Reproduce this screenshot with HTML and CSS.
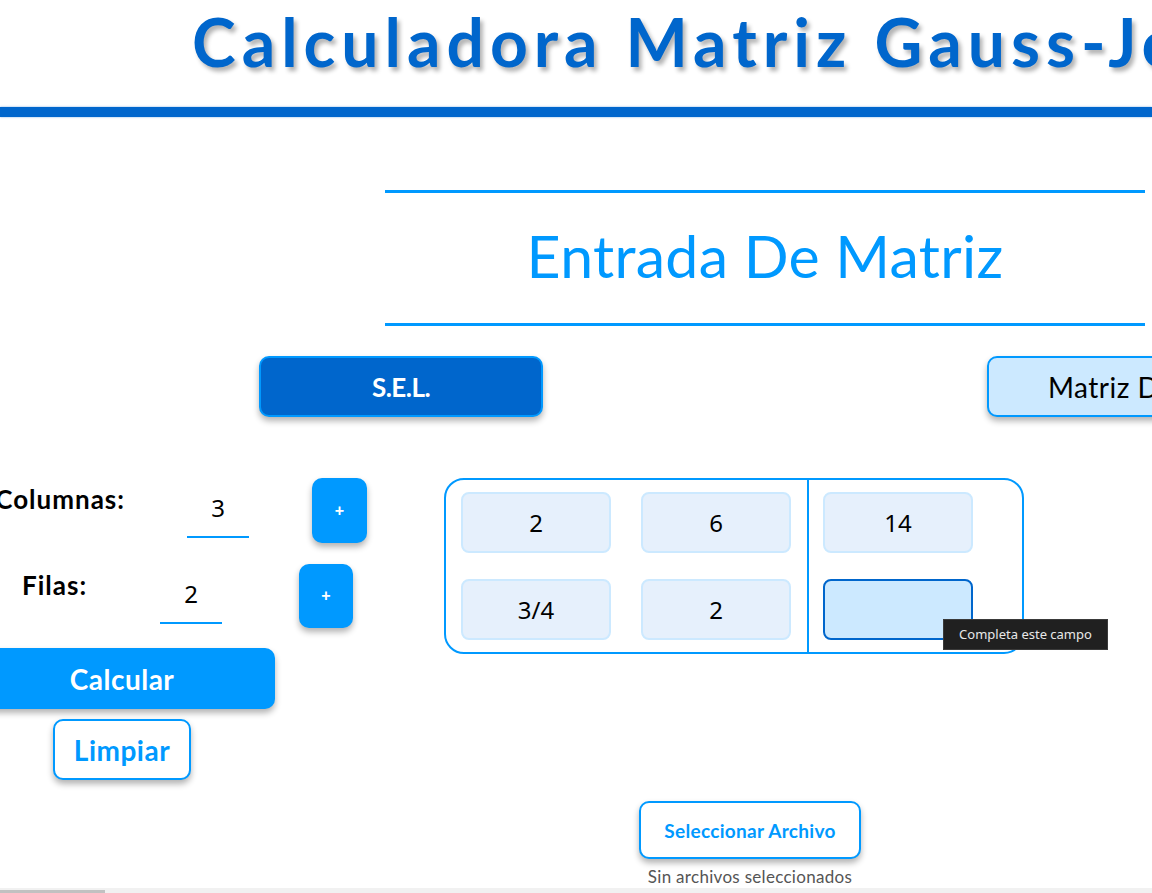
FILE: index.html
```html
<!DOCTYPE html>
<html lang="es">
<head>
<meta charset="utf-8">
<title>Calculadora Matriz Gauss-Jordan</title>
<link rel="stylesheet" href="styles.css">
</head>
<body>
<header class="header">
  <h1 class="title">Calculadora Matriz Gauss-Jordan</h1>
</header>
<div class="bar"></div>

<section class="entry">
  <div class="entry-head">
    <h2 class="entry-title">Entrada De Matriz</h2>
  </div>

  <div class="modes">
    <button class="mode mode-active">S.E.L.</button>
    <button class="mode mode-idle">Matriz Determinante</button>
  </div>

  <div class="work">
    <div class="controls">
      <div class="ctl-row row-cols">
        <label class="ctl-label">Columnas:</label>
        <input class="ctl-input" type="text" value="3">
        <button class="plus">+</button>
      </div>
      <div class="ctl-row row-rows">
        <label class="ctl-label">Filas:</label>
        <input class="ctl-input" type="text" value="2">
        <button class="plus">+</button>
      </div>
      <button class="calc">Calcular</button>
      <button class="clear">Limpiar</button>
    </div>

    <div class="matrix">
      <div class="coef">
        <input class="cell" type="text" value="2">
        <input class="cell" type="text" value="6">
        <input class="cell" type="text" value="3/4">
        <input class="cell" type="text" value="2">
      </div>
      <div class="consts">
        <input class="cell" type="text" value="14">
        <input class="cell cell-focus" type="text" value="">
      </div>
      <div class="tooltip">Completa este campo</div>
    </div>
  </div>

  <div class="file">
    <button class="file-btn">Seleccionar Archivo</button>
    <span class="file-note">Sin archivos seleccionados</span>
  </div>
</section>

<div class="hscroll"><div class="hscroll-thumb"></div></div>
</body>
</html>
```

FILE: styles.css
```css
html, body {
  margin: 0;
  padding: 0;
  background: #ffffff;
  overflow: hidden;
  width: 1152px;
  height: 893px;
}

body {
  font-family: "Lato", "DejaVu Sans", sans-serif;
  color: #000;
}

.header {
  height: 107px;
  overflow: hidden;
  white-space: nowrap;
}

.title {
  margin: 0;
  padding-left: 192px;
  font-family: "Lato", sans-serif;
  font-weight: 700;
  font-size: 66px;
  letter-spacing: 6px;
  line-height: 84px;
  color: #0066cc;
  text-shadow: 3px 4px 4px rgba(0, 0, 0, 0.3);
}

.bar {
  height: 10px;
  background: #0066cc;
  box-shadow: 0 0 2px rgba(0, 102, 204, 0.5);
}

.entry {
  padding-top: 73px;
}

.entry-head {
  margin-left: 385px;
  width: 760px;
  border-top: 3px solid #0099ff;
  border-bottom: 3px solid #0099ff;
  height: 130px;
  display: flex;
  align-items: center;
  justify-content: center;
}

.entry-title {
  margin: 0;
  font-family: "Lato", sans-serif;
  font-weight: 400;
  font-size: 59px;
  letter-spacing: 0.3px;
  color: #0099ff;
  padding-bottom: 6px;
}

.modes {
  display: flex;
  gap: 444px;
  padding-left: 259px;
  margin-top: 30px;
  white-space: nowrap;
}

.mode {
  flex: none;
  width: 284px;
  height: 61px;
  border-radius: 10px;
  border: 2px solid #0099ff;
  font-family: "Lato", sans-serif;
  font-size: 26px;
  font-weight: 700;
  box-shadow: 0 4px 6px rgba(0, 0, 0, 0.3);
  padding: 0;
}

.mode-active {
  background: #0066cc;
  color: #fff;
  letter-spacing: -0.5px;
}

.mode-idle {
  background: #cce9ff;
  color: #000;
  font-weight: 400;
  font-size: 28px;
  letter-spacing: 0.5px;
  text-align: left;
  padding-left: 59px;
}

.work {
  display: flex;
  margin-top: 61px;
  height: 323px;
}

.controls {
  width: 444px;
  flex: none;
  display: flex;
  flex-direction: column;
}

.ctl-row {
  display: flex;
  align-items: flex-start;
}

.ctl-label {
  font-family: "Lato", sans-serif;
  font-weight: 700;
  font-size: 26px;
  letter-spacing: 1px;
  line-height: 30px;
  white-space: nowrap;
}

.row-cols .ctl-label {
  width: 140px;
  margin-left: -15px;
  text-align: right;
  margin-top: 6px;
}

.row-rows {
  margin-top: 21px;
}

.row-rows .ctl-label {
  width: 63px;
  margin-left: 22px;
  margin-top: 6px;
}

.ctl-input {
  width: 62px;
  height: 46px;
  box-sizing: border-box;
  border: none;
  border-bottom: 2px solid #0099ff;
  background: transparent;
  text-align: center;
  font-family: "Noto Sans", sans-serif;
  font-size: 24px;
  color: #000;
  padding: 0 0 14px 0;
  margin-top: 14px;
  outline: none;
}

.row-cols .ctl-input {
  margin-left: 62px;
}

.row-rows .ctl-input {
  margin-left: 75px;
}

.plus {
  width: 55px;
  height: 65px;
  border: none;
  border-radius: 10px;
  background: #0099ff;
  color: #fff;
  font-weight: 700;
  font-size: 16px;
  box-shadow: 0 4px 6px rgba(0, 0, 0, 0.3);
  padding: 0;
}

.row-cols .plus {
  margin-left: 63px;
}

.row-rows .plus {
  margin-left: 77px;
  width: 54px;
  height: 64px;
}

.calc {
  margin-top: 20px;
  margin-left: -31px;
  width: 306px;
  height: 61px;
  border: none;
  border-radius: 10px;
  background: #0099ff;
  color: #fff;
  font-family: "Lato", sans-serif;
  font-weight: 700;
  font-size: 28px;
  letter-spacing: 0.5px;
  box-shadow: 0 4px 6px rgba(0, 0, 0, 0.3);
  padding: 0;
}

.clear {
  margin-top: 10px;
  margin-left: 53px;
  width: 138px;
  height: 61px;
  border: 2px solid #0099ff;
  border-radius: 10px;
  background: #fff;
  color: #0099ff;
  font-family: "Lato", sans-serif;
  font-weight: 700;
  font-size: 28px;
  letter-spacing: 0.5px;
  box-shadow: 0 4px 6px rgba(0, 0, 0, 0.3);
  padding: 0;
}

.matrix {
  position: relative;
  align-self: flex-start;
  width: 580px;
  height: 176px;
  box-sizing: border-box;
  border: 2px solid #0099ff;
  border-radius: 20px;
  display: flex;
}

.coef {
  display: grid;
  grid-template-columns: 150px 150px;
  align-content: start;
  column-gap: 30px;
  row-gap: 26px;
  padding: 12px 15px 0 15px;
  border-right: 2px solid #0099ff;
  width: 363px;
  box-sizing: border-box;
}

.consts {
  display: grid;
  grid-template-columns: 150px;
  align-content: start;
  row-gap: 26px;
  padding: 12px 0 0 14px;
}

.cell {
  width: 150px;
  height: 61px;
  box-sizing: border-box;
  border: 2px solid #cce9ff;
  border-radius: 8px;
  background: #e6f0fc;
  text-align: center;
  font-family: "Noto Sans", sans-serif;
  font-size: 24px;
  color: #000;
  padding: 0;
  outline: none;
}

.cell-focus {
  background: #cce9ff;
  border-color: #0066cc;
}

.tooltip {
  position: absolute;
  left: 497px;
  top: 139px;
  width: 165px;
  height: 31px;
  box-sizing: border-box;
  background: #202020;
  border: 1px solid #3a3a3a;
  color: #e8e8e8;
  font-family: "Noto Sans", sans-serif;
  font-size: 13px;
  line-height: 29px;
  text-align: center;
  white-space: nowrap;
}

.file {
  display: flex;
  flex-direction: column;
  align-items: center;
  margin-left: 639px;
  width: 222px;
}

.file-btn {
  width: 222px;
  height: 58px;
  border: 2px solid #0099ff;
  border-radius: 10px;
  background: #fff;
  color: #0099ff;
  font-family: "Lato", sans-serif;
  font-weight: 700;
  font-size: 19px;
  letter-spacing: 0.3px;
  box-shadow: 0 4px 6px rgba(0, 0, 0, 0.3);
  padding: 0;
}

.file-note {
  margin-top: 7px;
  font-family: "Lato", sans-serif;
  font-size: 17px;
  letter-spacing: 0.3px;
  color: #555;
  white-space: nowrap;
}

.hscroll {
  position: fixed;
  left: 0;
  bottom: 0;
  width: 1152px;
  height: 5px;
  background: #f1f1f1;
}

.hscroll-thumb {
  position: absolute;
  left: 0;
  bottom: 0;
  width: 105px;
  height: 3px;
  background: #c1c1c1;
}
```
